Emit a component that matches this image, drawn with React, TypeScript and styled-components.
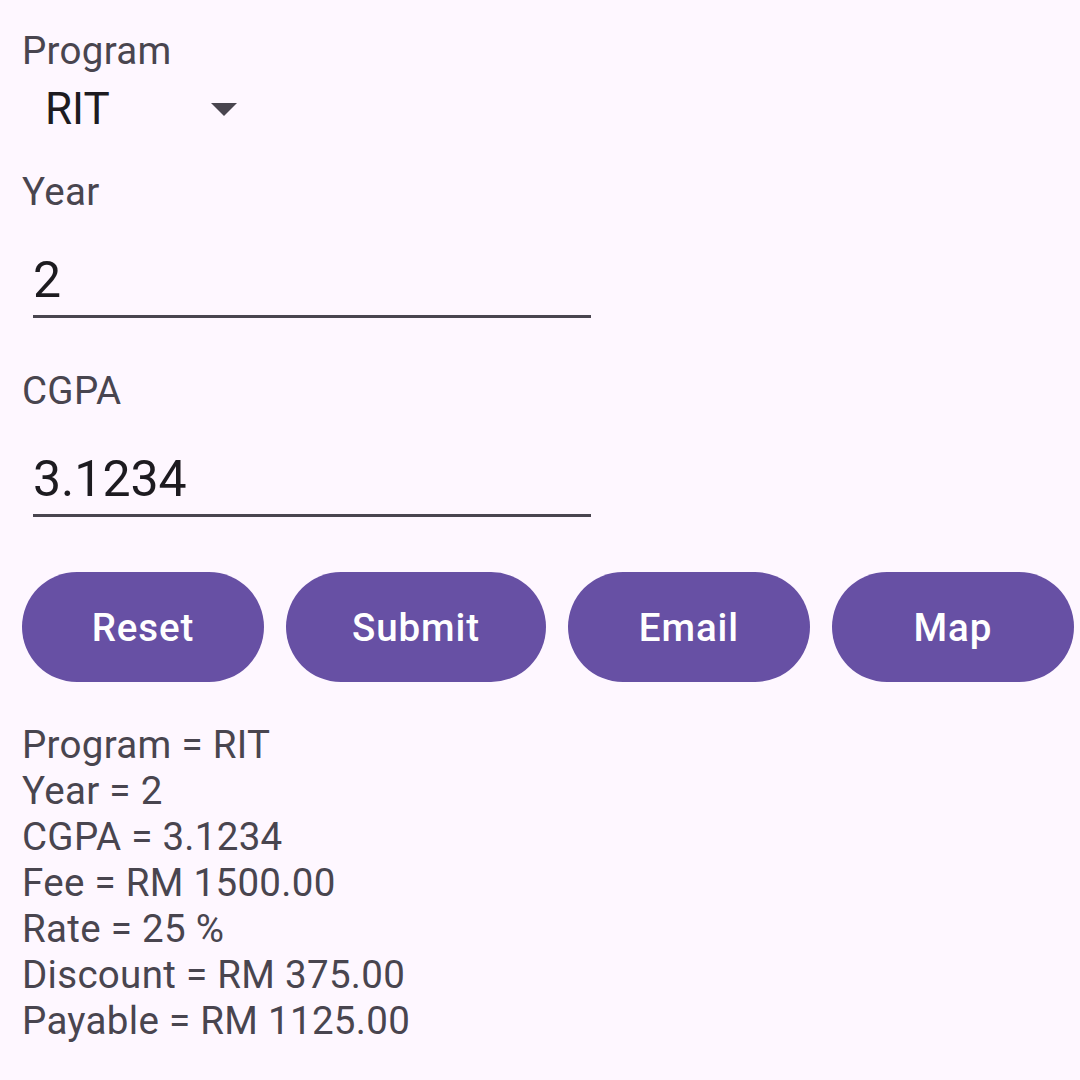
import React from "react";
import styled, { createGlobalStyle } from "styled-components";

const Global = createGlobalStyle`
  html, body {
    margin: 0;
    padding: 0;
    background: #FEF7FF;
  }
  body {
    font-family: Roboto, "Noto Sans", sans-serif;
    -webkit-font-smoothing: antialiased;
  }
`;

const Screen = styled.div`
  width: 1080px;
  height: 1080px;
  box-sizing: border-box;
  background: #fef7ff;
  padding: 28px 0 0 22px;
  display: flex;
  flex-direction: column;
  align-items: flex-start;
`;

const Label = styled.div<{ $top?: number }>`
  font-size: 38.5px;
  line-height: 46px;
  letter-spacing: 0.3px;
  color: #49454f;
  margin-top: ${(p) => p.$top ?? 0}px;
`;

const Spinner = styled.div`
  margin-top: 9px;
  width: 215px;
  height: 52px;
  box-sizing: border-box;
  padding-left: 23px;
  display: flex;
  align-items: center;
  justify-content: space-between;
`;

const SpinnerValue = styled.span`
  font-size: 44px;
  line-height: 52px;
  color: #1d1b20;
`;

const Caret = styled.span`
  width: 0;
  height: 0;
  border-left: 13px solid transparent;
  border-right: 13px solid transparent;
  border-top: 13px solid #49454f;
`;

const Field = styled.div`
  margin: 35px 0 0 11px;
  width: 558px;
  padding-bottom: 5px;
  border-bottom: 3px solid #49454f;
  font-size: 50px;
  line-height: 60px;
  color: #1d1b20;
`;

const ButtonRow = styled.div`
  margin-top: 55px;
  display: flex;
  gap: 22px;
`;

const Button = styled.button`
  height: 110px;
  min-width: 242px;
  padding: 0 66px;
  box-sizing: border-box;
  border: none;
  border-radius: 55px;
  background: #6750a4;
  color: #ffffff;
  font-family: Roboto, "Noto Sans", sans-serif;
  font-size: 38.5px;
  font-weight: 500;
  letter-spacing: 0.9px;
  display: flex;
  align-items: center;
  justify-content: center;
`;

const Output = styled.div`
  margin-top: 40px;
  font-size: 38.5px;
  line-height: 46px;
  letter-spacing: 0.3px;
  color: #49454f;
`;

const Line = styled.div``;

const results = [
  "Program = RIT",
  "Year = 2",
  "CGPA = 3.1234",
  "Fee = RM 1500.00",
  "Rate = 25 %",
  "Discount = RM 375.00",
  "Payable = RM 1125.00",
];

export default function App() {
  return (
    <>
      <Global />
      <Screen>
        <Label>Program</Label>
        <Spinner>
          <SpinnerValue>RIT</SpinnerValue>
          <Caret />
        </Spinner>
        <Label $top={34}>Year</Label>
        <Field>2</Field>
        <Label $top={50}>CGPA</Label>
        <Field>3.1234</Field>
        <ButtonRow>
          <Button>Reset</Button>
          <Button>Submit</Button>
          <Button>Email</Button>
          <Button>Map</Button>
        </ButtonRow>
        <Output>
          {results.map((r) => (
            <Line key={r}>{r}</Line>
          ))}
        </Output>
      </Screen>
    </>
  );
}
